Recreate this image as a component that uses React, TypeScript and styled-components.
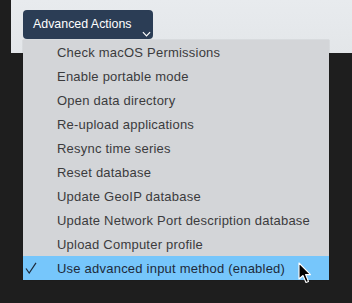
import { createGlobalStyle } from 'styled-components';
import styled from 'styled-components';

const GlobalStyle = createGlobalStyle`
    html, body {
        margin: 0;
        padding: 0;
        background: #1e1e1e;
        width: 352px;
        height: 303px;
        overflow: hidden;
        font-family: "Liberation Sans", Arial, sans-serif;
    }
`;

const items = [
    'Check macOS Permissions',
    'Enable portable mode',
    'Open data directory',
    'Re-upload applications',
    'Resync time series',
    'Reset database',
    'Update GeoIP database',
    'Update Network Port description database',
    'Upload Computer profile',
    'Use advanced input method (enabled)',
];

const App = () => {
    return (
        <Screen>
            <GlobalStyle />
            <Panel>
                <ActionButton>
                    Advanced Actions
                    <Chevron viewBox="0 0 10 6">
                        <path d="M1 1 L5 5 L9 1" fill="none" stroke="#ffffff" strokeWidth="1.3" />
                    </Chevron>
                </ActionButton>
            </Panel>
            <Menu>
                {items.map((label, i) => {
                    const active = i === items.length - 1;
                    return (
                        <MenuItem key={label} $active={active}>
                            <CheckCell>
                                {active && (
                                    <svg width="12" height="12" viewBox="0 0 12 12">
                                        <path
                                            d="M1 6.5 L4.2 11 L11 0.8"
                                            fill="none"
                                            stroke="#1d2a3a"
                                            strokeWidth="1.2"
                                        />
                                    </svg>
                                )}
                            </CheckCell>
                            <span>{label}</span>
                        </MenuItem>
                    );
                })}
            </Menu>
            <Cursor viewBox="0 0 14 22">
                <path
                    d="M1 1 L1 17 L5 13.5 L8 20.5 L10.5 19.5 L7.6 12.6 L12.5 12.6 Z"
                    fill="#000"
                    stroke="#fff"
                    strokeWidth="1.1"
                    strokeLinejoin="round"
                />
            </Cursor>
        </Screen>
    );
};

export default App;

const Screen = styled.div`
    position: relative;
    width: 352px;
    height: 303px;
`;

const Panel = styled.div`
    margin-left: 11px;
    height: 53px;
    background: linear-gradient(180deg, #e8ebee 0%, #e3e6e9 100%);
    padding: 10px 0 0 12px;
    box-sizing: border-box;
`;

const ActionButton = styled.div`
    position: relative;
    width: 130px;
    height: 29px;
    box-sizing: border-box;
    background: #2b3d55;
    border-radius: 4px;
    color: #ffffff;
    font-size: 12.4px;
    line-height: 29px;
    padding-left: 10px;
`;

const Chevron = styled.svg`
    position: absolute;
    right: 2px;
    bottom: 2px;
    width: 9px;
    height: 6px;
`;

const Menu = styled.div`
    position: absolute;
    left: 23px;
    top: 40px;
    width: 306px;
    background: #d3d5d8;
    box-shadow: 0 0 1px rgba(0, 0, 0, 0.3);
    display: flex;
    flex-direction: column;
`;

const MenuItem = styled.div<{ $active: boolean }>`
    height: 24px;
    display: flex;
    align-items: center;
    font-size: 13px;
    letter-spacing: 0.22px;
    color: ${(p) => (p.$active ? '#1d2a3a' : '#3b3b3d')};
    background: ${(p) => (p.$active ? '#76c6fb' : 'transparent')};
`;

const CheckCell = styled.span`
    width: 34px;
    padding-left: 2px;
    box-sizing: border-box;
    display: flex;
    align-items: center;
`;

const Cursor = styled.svg`
    position: absolute;
    left: 298px;
    top: 262px;
    width: 14px;
    height: 22px;
`;
